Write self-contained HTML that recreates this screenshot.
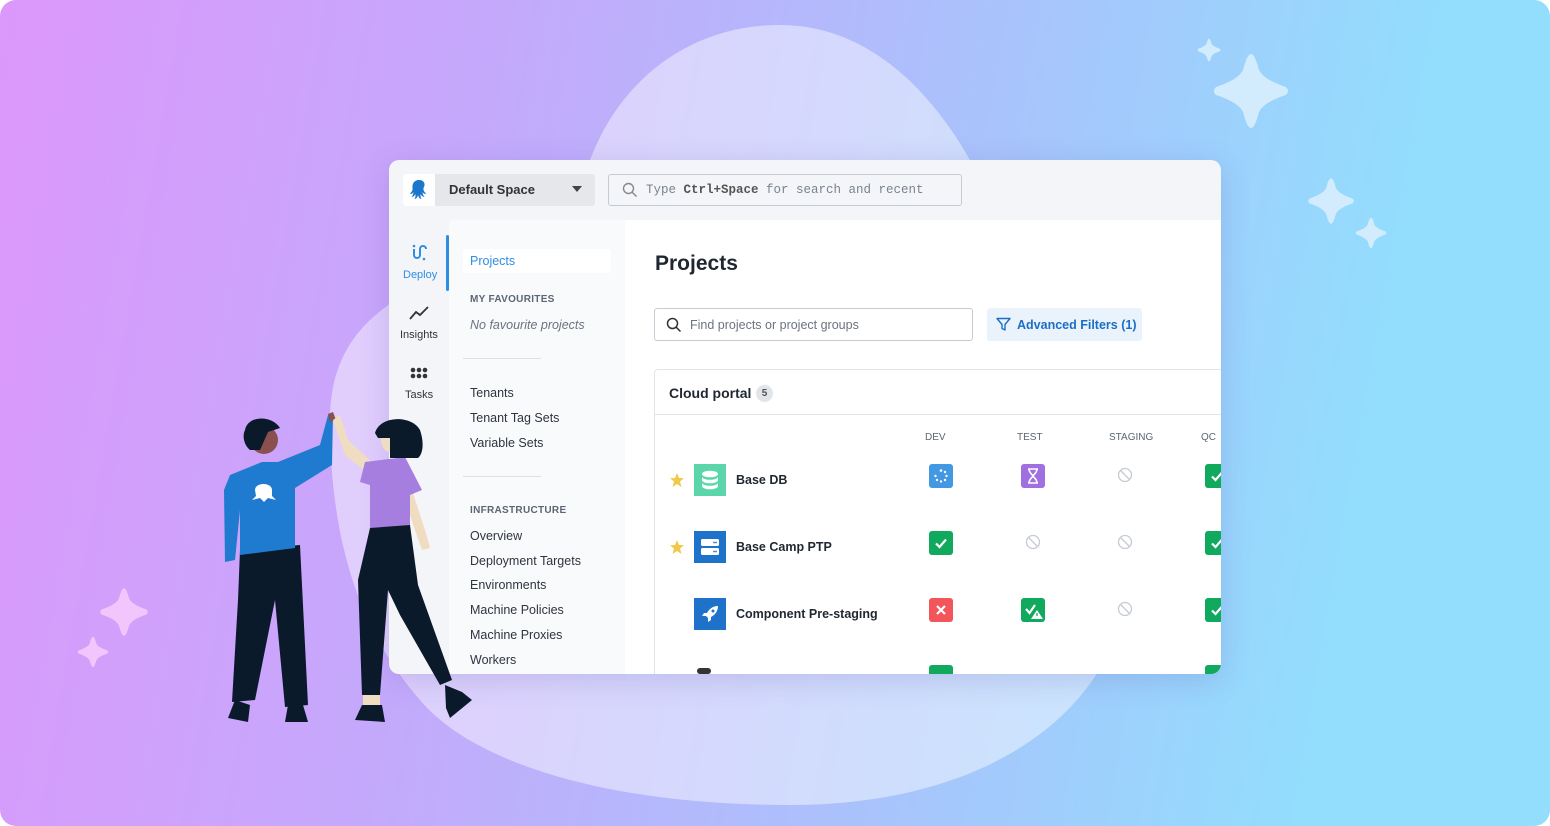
<!DOCTYPE html>
<html><head><meta charset="utf-8">
<style>
*{margin:0;padding:0;box-sizing:border-box}
html,body{width:1550px;height:826px;overflow:hidden;background:#fff}
body{font-family:"Liberation Sans",Arial,sans-serif;position:relative}
.bg{position:absolute;inset:0;border-radius:16px;background:linear-gradient(100deg,#dc98fb 0%,#c4a9fb 30%,#a9c3fc 60%,#93ddfd 85%,#93ddfd 100%);overflow:hidden}
.sp{position:absolute}
.win{position:absolute;left:389px;top:160px;width:832px;height:514px;border-radius:10px;background:#f4f5f8;overflow:hidden;box-shadow:0 6px 30px rgba(80,60,160,.18)}
.abs{position:absolute}
.t{position:absolute;white-space:nowrap}
.nav{font-size:12.5px;color:#2e3440}
.badge{position:absolute;width:24px;height:24px;border-radius:3px}
.no{position:absolute;width:16px;height:16px}
</style></head><body>
<div class="bg">
<svg class="abs" style="left:0;top:0" width="1550" height="826">
<path d="M590 160 C620 80 690 25 780 25 C880 25 950 110 990 200 C1040 300 1130 420 1130 560 C1130 700 1000 805 790 805 C600 805 470 760 420 700 C350 620 330 520 330 420 C330 330 390 300 450 270 C520 235 560 220 590 160Z" fill="#ffffff" fill-opacity="0.45"/>
</svg>
<svg class="sp" style="left:1197px;top:38px" width="24" height="24" viewBox="-1 -1 2 2"><path d="M0,-.95 Q.1,-.95 .2,-.55 Q.3,-.3 .9,-.1 Q1,0 .9,.1 Q.3,.3 .2,.55 Q.1,.95 0,.95 Q-.1,.95 -.2,.55 Q-.3,.3 -.9,.1 Q-1,0 -.9,-.1 Q-.3,-.3 -.2,-.55 Q-.1,-.95 0,-.95Z" fill="#d2ecfd"/></svg>
<svg class="sp" style="left:1212px;top:52px" width="78" height="78" viewBox="-1 -1 2 2"><path d="M0,-.95 Q.1,-.95 .2,-.55 Q.3,-.3 .9,-.1 Q1,0 .9,.1 Q.3,.3 .2,.55 Q.1,.95 0,.95 Q-.1,.95 -.2,.55 Q-.3,.3 -.9,.1 Q-1,0 -.9,-.1 Q-.3,-.3 -.2,-.55 Q-.1,-.95 0,-.95Z" fill="#d2ecfd"/></svg>
<svg class="sp" style="left:1307px;top:177px" width="48" height="48" viewBox="-1 -1 2 2"><path d="M0,-.95 Q.1,-.95 .2,-.55 Q.3,-.3 .9,-.1 Q1,0 .9,.1 Q.3,.3 .2,.55 Q.1,.95 0,.95 Q-.1,.95 -.2,.55 Q-.3,.3 -.9,.1 Q-1,0 -.9,-.1 Q-.3,-.3 -.2,-.55 Q-.1,-.95 0,-.95Z" fill="#d2ecfd"/></svg>
<svg class="sp" style="left:1355px;top:217px" width="32" height="32" viewBox="-1 -1 2 2"><path d="M0,-.95 Q.1,-.95 .2,-.55 Q.3,-.3 .9,-.1 Q1,0 .9,.1 Q.3,.3 .2,.55 Q.1,.95 0,.95 Q-.1,.95 -.2,.55 Q-.3,.3 -.9,.1 Q-1,0 -.9,-.1 Q-.3,-.3 -.2,-.55 Q-.1,-.95 0,-.95Z" fill="#d2ecfd"/></svg>
<svg class="sp" style="left:99px;top:587px" width="50" height="50" viewBox="-1 -1 2 2"><path d="M0,-.95 Q.1,-.95 .2,-.55 Q.3,-.3 .9,-.1 Q1,0 .9,.1 Q.3,.3 .2,.55 Q.1,.95 0,.95 Q-.1,.95 -.2,.55 Q-.3,.3 -.9,.1 Q-1,0 -.9,-.1 Q-.3,-.3 -.2,-.55 Q-.1,-.95 0,-.95Z" fill="#f0c6fd"/></svg>
<svg class="sp" style="left:77px;top:636px" width="32" height="32" viewBox="-1 -1 2 2"><path d="M0,-.95 Q.1,-.95 .2,-.55 Q.3,-.3 .9,-.1 Q1,0 .9,.1 Q.3,.3 .2,.55 Q.1,.95 0,.95 Q-.1,.95 -.2,.55 Q-.3,.3 -.9,.1 Q-1,0 -.9,-.1 Q-.3,-.3 -.2,-.55 Q-.1,-.95 0,-.95Z" fill="#f0c6fd"/></svg>
</div>

<div class="win">
 <div class="abs" style="left:14px;top:14px;width:192px;height:32px;background:#e5e7eb;border-radius:3px"></div>
 <div class="abs" style="left:14px;top:14px;width:32px;height:32px;background:#fff;border-radius:3px 0 0 3px"></div>
 <svg class="abs" style="left:20px;top:19px" width="20" height="22" viewBox="0 0 20 22"><path d="M10 1C5 1 3 5 3.5 9 4 12 2 13 1 15c2 0 3-1 3.5-2 0 2-1 4-2 5 2 0 3.5-2 4-3 0 2 0 4-1 5 2 0 3-2 3.5-4 .5 2 1.5 4 3.5 4-1-1-1-3-1-5 .5 1 2 3 4 3-1-1-2-3-2-5 .5 1 1.5 2 3.5 2-1-2-3-3-2.5-6C17 5 15 1 10 1Z" fill="#1a77ca"/></svg>
 <div class="t" style="left:60px;top:22px;font-size:13px;font-weight:bold;color:#333">Default Space</div>
 <svg class="abs" style="left:183px;top:26px" width="10" height="6"><path d="M0 0H10L5 6Z" fill="#444"/></svg>
 <div class="abs" style="left:219px;top:14px;width:354px;height:32px;border:1px solid #c5cbd3;border-radius:3px;background:#f4f5f8"></div>
 <svg class="abs" style="left:233px;top:22px" width="16" height="16" viewBox="0 0 16 16"><circle cx="6.5" cy="6.5" r="5" fill="none" stroke="#888" stroke-width="1.4"/><path d="M10.2 10.2 14.5 14.5" stroke="#888" stroke-width="1.4"/></svg>
 <div class="t" style="left:257px;top:23px;font-family:'Liberation Mono',monospace;font-size:12.5px;color:#7a8290">Type <b style="color:#555">Ctrl+Space</b> for search and recent</div>

 <div class="abs" style="left:57px;top:75px;width:3px;height:56px;background:#2f8de4;border-radius:2px"></div>
 <svg class="abs" style="left:22px;top:84px" width="16" height="18" viewBox="0 0 16 18"><path d="M3 5v6a3 3 0 0 0 6 0V5a3 3 0 0 1 6 0" fill="none" stroke="#2f8de4" stroke-width="2"/><circle cx="3" cy="2" r="1.3" fill="#2f8de4"/><circle cx="13" cy="15" r="1.3" fill="#2f8de4"/></svg>
 <div class="t" style="left:14px;top:109px;font-size:11px;color:#2f8de4">Deploy</div>
 <svg class="abs" style="left:20px;top:146px" width="20" height="14" viewBox="0 0 20 14"><path d="M1 13 7 6 11 9 19 1" fill="none" stroke="#333" stroke-width="1.8"/></svg>
 <div class="t" style="left:11px;top:169px;font-size:11px;color:#333">Insights</div>
 <svg class="abs" style="left:21px;top:207px" width="18" height="12"><g fill="#333"><circle cx="3" cy="3" r="2.3"/><circle cx="9" cy="3" r="2.3"/><circle cx="15" cy="3" r="2.3"/><circle cx="3" cy="9" r="2.3"/><circle cx="9" cy="9" r="2.3"/><circle cx="15" cy="9" r="2.3"/></g></svg>
 <div class="t" style="left:16px;top:229px;font-size:11px;color:#333">Tasks</div>

 <div class="abs" style="left:60px;top:60px;width:800px;height:470px;background:#f9fafb;border-radius:6px 0 0 0"></div>
 <div class="abs" style="left:236px;top:60px;width:600px;height:470px;background:#fff"></div>
 <div class="abs" style="left:74px;top:89px;width:148px;height:24px;background:#fff;border-radius:3px"></div>
 <div class="t nav" style="left:81px;top:94px;color:#2f8de4">Projects</div>
 <div class="t" style="left:81px;top:134px;font-size:10px;font-weight:bold;color:#5b6675;letter-spacing:.3px">MY FAVOURITES</div>
 <div class="t nav" style="left:81px;top:158px;font-style:italic;color:#6b7380">No favourite projects</div>
 <div class="abs" style="left:74px;top:198px;width:78px;height:1px;background:#dde1e7"></div>
 <div class="t nav" style="left:81px;top:226px">Tenants</div>
 <div class="t nav" style="left:81px;top:251px">Tenant Tag Sets</div>
 <div class="t nav" style="left:81px;top:276px">Variable Sets</div>
 <div class="abs" style="left:74px;top:316px;width:78px;height:1px;background:#dde1e7"></div>
 <div class="t" style="left:81px;top:345px;font-size:10px;font-weight:bold;color:#5b6675;letter-spacing:.3px">INFRASTRUCTURE</div>
 <div class="t nav" style="left:81px;top:369px">Overview</div>
 <div class="t nav" style="left:81px;top:394px">Deployment Targets</div>
 <div class="t nav" style="left:81px;top:418px">Environments</div>
 <div class="t nav" style="left:81px;top:443px">Machine Policies</div>
 <div class="t nav" style="left:81px;top:468px">Machine Proxies</div>
 <div class="t nav" style="left:81px;top:493px">Workers</div>

 <div class="t" style="left:266px;top:92px;font-size:21px;font-weight:bold;color:#1f2730">Projects</div>
 <div class="abs" style="left:265px;top:148px;width:319px;height:33px;border:1px solid #c5cbd3;border-radius:3px"></div>
 <svg class="abs" style="left:277px;top:157px" width="16" height="16" viewBox="0 0 16 16"><circle cx="6.5" cy="6.5" r="5" fill="none" stroke="#333" stroke-width="1.5"/><path d="M10.2 10.2 14.5 14.5" stroke="#333" stroke-width="1.5"/></svg>
 <div class="t" style="left:301px;top:158px;font-size:12.5px;color:#6b7380">Find projects or project groups</div>
 <div class="abs" style="left:598px;top:148px;width:155px;height:33px;background:#eaf3fc;border-radius:3px"></div>
 <svg class="abs" style="left:607px;top:157px" width="15" height="15" viewBox="0 0 15 15"><path d="M1 1.5H14L9 7.5V13L6 11.5V7.5Z" fill="none" stroke="#1a6fc4" stroke-width="1.4" stroke-linejoin="round"/></svg>
 <div class="t" style="left:628px;top:158px;font-size:12.5px;font-weight:bold;color:#1a6fc4">Advanced Filters (1)</div>

 <div class="abs" style="left:265px;top:209px;width:600px;height:320px;border:1px solid #e1e4e8;border-radius:4px"></div>
 <div class="abs" style="left:266px;top:254px;width:600px;height:1px;background:#e1e4e8"></div>
 <div class="t" style="left:280px;top:225px;font-size:14px;font-weight:bold;color:#1f2730">Cloud portal</div>
 <div class="abs" style="left:367px;top:225px;width:17px;height:17px;border-radius:50%;background:#e1e4e8;font-size:10px;color:#555;text-align:center;line-height:17px;font-weight:bold">5</div>

 <div class="t" style="left:536px;top:272px;font-size:10px;color:#5b6675">DEV</div>
 <div class="t" style="left:628px;top:272px;font-size:10px;color:#5b6675">TEST</div>
 <div class="t" style="left:720px;top:272px;font-size:10px;color:#5b6675">STAGING</div>
 <div class="t" style="left:812px;top:272px;font-size:10px;color:#5b6675">QC</div>

 <svg class="abs" style="left:280px;top:312px" width="16" height="16" viewBox="0 0 16 16"><path d="M8 1 10 6 15 6.2 11 9.5 12.5 15 8 12 3.5 15 5 9.5 1 6.2 6 6Z" fill="#f0c84a"/></svg>
 <div class="abs" style="left:305px;top:304px;width:32px;height:32px;background:#5bd6ab"></div>
 <svg class="abs" style="left:312px;top:310px" width="18" height="20" viewBox="0 0 18 20"><ellipse cx="9" cy="4" rx="8" ry="3.3" fill="#fff"/><path d="M1 6.5c0 2 3.5 3.3 8 3.3s8-1.3 8-3.3v3.5c0 2-3.5 3.3-8 3.3S1 12 1 10Z M1 12.5c0 2 3.5 3.3 8 3.3s8-1.3 8-3.3V16c0 2-3.5 3.3-8 3.3S1 18 1 16Z" fill="#fff"/></svg>
 <div class="t" style="left:347px;top:313px;font-size:12.5px;font-weight:bold;color:#1f2730">Base DB</div>
 <div class="badge" style="left:540px;top:304px;background:#4298e3"></div>
 <svg class="abs" style="left:544px;top:308px" width="16" height="16"><g fill="#fff"><circle cx="8" cy="2.5" r="1.3"/><circle cx="12" cy="4" r="1.2"/><circle cx="13.5" cy="8" r="1.2"/><circle cx="12" cy="12" r="1.2"/><circle cx="8" cy="13.5" r="1.2"/><circle cx="4" cy="12" r="1.2"/><circle cx="2.5" cy="8" r="1.2"/></g></svg>
 <div class="badge" style="left:632px;top:304px;background:#a06fe0"></div>
 <svg class="abs" style="left:638px;top:308px" width="12" height="16" viewBox="0 0 12 16"><path d="M1 1H11M1 15H11M2 1C2 5 6 7 6 8S2 11 2 15M10 1C10 5 6 7 6 8S10 11 10 15" fill="none" stroke="#fff" stroke-width="1.6"/></svg>
 <svg class="no" style="left:728px;top:307px" viewBox="0 0 16 16"><circle cx="8" cy="8" r="6.5" fill="none" stroke="#c5cbd3" stroke-width="1.3"/><path d="M3.5 3.5 12.5 12.5" stroke="#c5cbd3" stroke-width="1.3"/></svg>
 <div class="badge" style="left:816px;top:304px;background:#10a95d"></div>

 <svg class="abs" style="left:280px;top:379px" width="16" height="16" viewBox="0 0 16 16"><path d="M8 1 10 6 15 6.2 11 9.5 12.5 15 8 12 3.5 15 5 9.5 1 6.2 6 6Z" fill="#f0c84a"/></svg>
 <div class="abs" style="left:305px;top:371px;width:32px;height:32px;background:#1f72c9"></div>
 <svg class="abs" style="left:311px;top:378px" width="20" height="18" viewBox="0 0 20 18"><rect x="1" y="1" width="18" height="7" rx="1.5" fill="#fff"/><rect x="1" y="10" width="18" height="7" rx="1.5" fill="#fff"/><circle cx="14" cy="4.5" r=".9" fill="#1f72c9"/><circle cx="16" cy="4.5" r=".9" fill="#1f72c9"/><circle cx="14" cy="13.5" r=".9" fill="#1f72c9"/><circle cx="16" cy="13.5" r=".9" fill="#1f72c9"/></svg>
 <div class="t" style="left:347px;top:380px;font-size:12.5px;font-weight:bold;color:#1f2730">Base Camp PTP</div>
 <div class="badge" style="left:540px;top:371px;background:#10a95d"></div>
 <svg class="abs" style="left:544px;top:375px" width="16" height="16"><path d="M3 8.5 6.5 12 13 4.5" fill="none" stroke="#fff" stroke-width="2.2"/></svg>
 <svg class="no" style="left:636px;top:374px" viewBox="0 0 16 16"><circle cx="8" cy="8" r="6.5" fill="none" stroke="#c5cbd3" stroke-width="1.3"/><path d="M3.5 3.5 12.5 12.5" stroke="#c5cbd3" stroke-width="1.3"/></svg>
 <svg class="no" style="left:728px;top:374px" viewBox="0 0 16 16"><circle cx="8" cy="8" r="6.5" fill="none" stroke="#c5cbd3" stroke-width="1.3"/><path d="M3.5 3.5 12.5 12.5" stroke="#c5cbd3" stroke-width="1.3"/></svg>
 <div class="badge" style="left:816px;top:371px;background:#10a95d"></div>

 <div class="abs" style="left:305px;top:438px;width:32px;height:32px;background:#1f72c9"></div>
 <svg class="abs" style="left:311px;top:444px" width="20" height="20" viewBox="0 0 20 20"><path d="M18 2C13 2 9 5 7 9L4 9 2 12 6 12 8 14 8 18 11 16 11 13C15 11 18 7 18 2Z" fill="#fff"/><circle cx="13" cy="7" r="1.5" fill="#1f72c9"/></svg>
 <div class="t" style="left:347px;top:447px;font-size:12.5px;font-weight:bold;color:#1f2730">Component Pre-staging</div>
 <div class="badge" style="left:540px;top:438px;background:#f2555a"></div>
 <svg class="abs" style="left:546px;top:444px" width="12" height="12"><path d="M2 2 10 10M10 2 2 10" stroke="#fff" stroke-width="2.2"/></svg>
 <div class="badge" style="left:632px;top:438px;background:#10a95d"></div>
 <svg class="abs" style="left:635px;top:442px" width="20" height="18"><path d="M2 7 5.5 11 11 3" fill="none" stroke="#fff" stroke-width="2.2"/><path d="M13 8 19 17H7Z" fill="#fff"/><path d="M13 11V14" stroke="#10a95d" stroke-width="1.3"/></svg>
 <svg class="no" style="left:728px;top:441px" viewBox="0 0 16 16"><circle cx="8" cy="8" r="6.5" fill="none" stroke="#c5cbd3" stroke-width="1.3"/><path d="M3.5 3.5 12.5 12.5" stroke="#c5cbd3" stroke-width="1.3"/></svg>
 <div class="badge" style="left:816px;top:438px;background:#10a95d"></div>
 <svg class="abs" style="left:820px;top:308px" width="12" height="16"><path d="M3 8.5 6.5 12 13 4.5" fill="none" stroke="#fff" stroke-width="2.2"/></svg>
 <svg class="abs" style="left:820px;top:375px" width="12" height="16"><path d="M3 8.5 6.5 12 13 4.5" fill="none" stroke="#fff" stroke-width="2.2"/></svg>
 <svg class="abs" style="left:820px;top:442px" width="12" height="16"><path d="M3 8.5 6.5 12 13 4.5" fill="none" stroke="#fff" stroke-width="2.2"/></svg>

 <div class="badge" style="left:540px;top:505px;background:#10a95d"></div>
 <div class="badge" style="left:816px;top:505px;background:#10a95d"></div>
 <div class="abs" style="left:308px;top:508px;width:14px;height:6px;background:#333;border-radius:3px"></div>
</div>

<svg class="abs" style="left:200px;top:400px" width="290" height="330" viewBox="0 0 290 330">
 <path d="M62 150 L52 170 L48 180 L60 182 L70 160Z" fill="#8a4f4f"/>
 <path d="M35 300 L28 318 L48 322 L50 305Z" fill="#0a1a2a"/>
 <path d="M88 305 L85 322 L108 322 L103 305Z" fill="#0a1a2a"/>
 <path d="M40 150 L100 145 L108 305 L85 307 L75 200 L55 300 L32 302 L38 200Z" fill="#0a1a2a"/>
 <path d="M30 75 L62 62 L78 62 L120 45 L128 15 L133 15 L132 65 L95 88 L95 148 L40 155 L40 110 L35 160 L25 162 L24 90Z" fill="#1e7bcf"/>
 <circle cx="64" cy="40" r="14" fill="#8a4f4f"/>
 <path d="M45 30 C48 15 72 15 80 28 L68 32 L60 50 L50 50 C44 45 42 36 45 30Z" fill="#0a1a2a"/>
 <path d="M55 90 C55 82 72 82 72 90 L72 96 L76 100 L68 98 L64 102 L60 98 L52 100 L56 96Z" fill="#fff"/>
 <path d="M128 14 L133 12 L136 20 L130 22Z" fill="#8a4f4f"/>
 <path d="M133 20 L140 15 L148 40 L175 65 L170 75 L145 55Z" fill="#f0dcc0"/>
 <path d="M212 90 L225 130 L230 148 L222 150 L215 130 L205 100Z" fill="#f0dcc0"/>
 <path d="M165 62 L205 57 L222 90 L210 95 L210 128 L170 132 L170 85 L160 82Z" fill="#a57ee0"/>
 <path d="M170 128 L210 125 L218 185 L252 280 L240 285 L200 215 L188 190 L180 295 L162 295 L158 180Z" fill="#0a1a2a"/>
 <path d="M162 305 L155 320 L185 322 L182 305Z" fill="#0a1a2a"/>
 <path d="M245 285 L262 292 L272 300 L250 318 L246 308Z" fill="#0a1a2a"/>
 <path d="M163 295 L180 295 L180 305 L163 305Z" fill="#f0dcc0"/>
 <circle cx="195" cy="40" r="14" fill="#f0dcc0"/>
 <path d="M175 33 C180 15 212 15 220 30 C225 45 222 55 218 58 L190 58 L190 38 L178 38Z" fill="#0a1a2a"/>
</svg>
</body></html>
